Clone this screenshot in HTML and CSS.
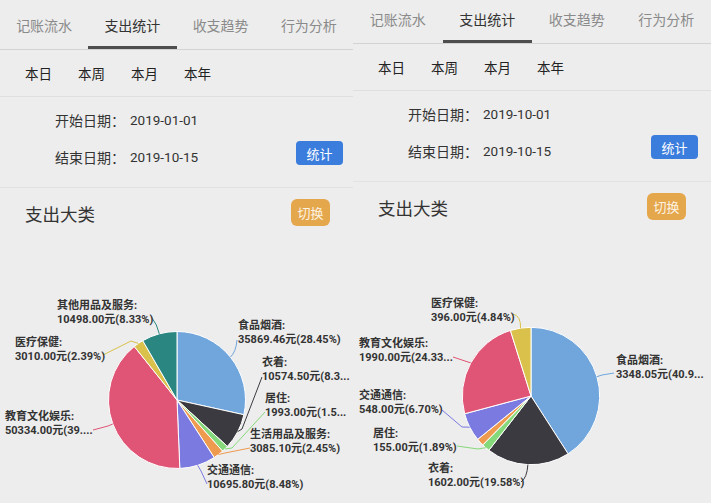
FILE: index.html
```html
<!DOCTYPE html>
<html lang="zh">
<head>
<meta charset="utf-8">
<title>支出统计</title>
<link rel="stylesheet" href="styles.css">
</head>
<body>
<div class="screen">
  <section class="panel panel-a">
    <nav class="tabs">
      <div class="tab">记账流水</div>
      <div class="tab active">支出统计</div>
      <div class="tab">收支趋势</div>
      <div class="tab">行为分析</div>
    </nav>
    <div class="periods"><span>本日</span><span>本周</span><span>本月</span><span>本年</span></div>
    <div class="dates">
      <div class="date-rows">
        <div class="date-row"><span class="dlabel">开始日期：</span><span class="dval">2019-01-01</span></div>
        <div class="date-row"><span class="dlabel">结束日期：</span><span class="dval">2019-10-15</span></div>
      </div>
      <button class="btn btn-blue">统计</button>
    </div>
    <div class="sec-head"><h2 class="sec-title">支出大类</h2><button class="btn btn-orange">切换</button></div>
    <div class="chart">
      <svg class="pie" width="353" height="271" viewBox="0 232 353 271">
        <g class="slices">
          <path fill="#70a6dc" d="M177 400 L177 331.5 A68.5 68.5 0 0 1 243.9 414.73 Z"/>
          <path fill="#3b3a41" d="M177 400 L243.9 414.73 A68.5 68.5 0 0 1 227.39 446.4 Z"/>
          <path fill="#86d97a" d="M177 400 L227.39 446.4 A68.5 68.5 0 0 1 222.57 451.14 Z"/>
          <path fill="#ef9b4f" d="M177 400 L222.57 451.14 A68.5 68.5 0 0 1 214.17 457.54 Z"/>
          <path fill="#7b7ae0" d="M177 400 L214.17 457.54 A68.5 68.5 0 0 1 179.8 468.44 Z"/>
          <path fill="#e05476" d="M177 400 L179.8 468.44 A68.5 68.5 0 0 1 134.27 346.46 Z"/>
          <path fill="#d9c14b" d="M177 400 L134.27 346.46 A68.5 68.5 0 0 1 142.77 340.67 Z"/>
          <path fill="#2a8680" d="M177 400 L142.77 340.67 A68.5 68.5 0 0 1 177 331.5 Z"/>
        </g>
        <g class="leaders">
          <path stroke="#70a6dc" d="M230.4 357.1 Q236 352 237 340"/>
          <path stroke="#3b3a41" d="M237.8 431.6 L242 429 L262 377"/>
          <path stroke="#86d97a" d="M225 449 L232 448 L265 412"/>
          <path stroke="#ef9b4f" d="M218.5 454.5 L225 453 L250 448"/>
          <path stroke="#7b7ae0" d="M197.7 465.3 L201 471 L207 484"/>
          <path stroke="#e05476" d="M112.8 424 L108 426 L93 430"/>
          <path stroke="#d9c14b" d="M138.4 343.4 L131 341 L103 355"/>
          <path stroke="#2a8680" d="M159.3 333.8 Q157 324 152 318"/>
        </g>
        <g class="labels">
          <text x="57" y="309">其他用品及服务:</text><text x="57" y="323">10498.00元(8.33%)</text>
          <text x="15" y="346">医疗保健:</text><text x="15" y="360">3010.00元(2.39%)</text>
          <text x="5" y="420">教育文化娱乐:</text><text x="5" y="434">50334.00元(39....</text>
          <text x="238" y="329">食品烟酒:</text><text x="238" y="343">35869.46元(28.45%)</text>
          <text x="262" y="366">衣着:</text><text x="262" y="380">10574.50元(8.3...</text>
          <text x="265" y="402">居住:</text><text x="265" y="416">1993.00元(1.5...</text>
          <text x="250" y="438">生活用品及服务:</text><text x="250" y="452">3085.10元(2.45%)</text>
          <text x="207" y="474">交通通信:</text><text x="207" y="488">10695.80元(8.48%)</text>
        </g>
      </svg>
    </div>
  </section>

  <section class="panel panel-b">
    <nav class="tabs">
      <div class="tab">记账流水</div>
      <div class="tab active">支出统计</div>
      <div class="tab">收支趋势</div>
      <div class="tab">行为分析</div>
    </nav>
    <div class="periods"><span>本日</span><span>本周</span><span>本月</span><span>本年</span></div>
    <div class="dates">
      <div class="date-rows">
        <div class="date-row"><span class="dlabel">开始日期：</span><span class="dval">2019-10-01</span></div>
        <div class="date-row"><span class="dlabel">结束日期：</span><span class="dval">2019-10-15</span></div>
      </div>
      <button class="btn btn-blue">统计</button>
    </div>
    <div class="sec-head"><h2 class="sec-title">支出大类</h2><button class="btn btn-orange">切换</button></div>
    <div class="chart">
      <svg class="pie" width="358" height="277" viewBox="353 226 358 277">
        <g class="slices">
          <path fill="#70a6dc" d="M531 396 L531 327.3 A68.7 68.7 0 0 1 568.11 453.82 Z"/>
          <path fill="#3b3a41" d="M531 396 L568.11 453.82 A68.7 68.7 0 0 1 488.89 450.29 Z"/>
          <path fill="#86d97a" d="M531 396 L488.89 450.29 A68.7 68.7 0 0 1 482.75 444.91 Z"/>
          <path fill="#ef9b4f" d="M531 396 L482.75 444.91 A68.7 68.7 0 0 1 477.68 439.33 Z"/>
          <path fill="#7b7ae0" d="M531 396 L477.68 439.33 A68.7 68.7 0 0 1 464.64 413.77 Z"/>
          <path fill="#e05476" d="M531 396 L464.64 413.77 A68.7 68.7 0 0 1 510.42 330.45 Z"/>
          <path fill="#d9c14b" d="M531 396 L510.42 330.45 A68.7 68.7 0 0 1 531 327.3 Z"/>
        </g>
        <g class="leaders">
          <path stroke="#d9c14b" d="M520.6 328.1 Q521 316 513 314"/>
          <path stroke="#e05476" d="M470.8 362.9 L465 361 L453 357"/>
          <path stroke="#7b7ae0" d="M469.8 427.2 L462 427 L442 410"/>
          <path stroke="#86d97a" d="M485.7 447.7 L478 449 L457 446"/>
          <path stroke="#3b3a41" d="M527.9 464.6 Q527 478 521 482"/>
          <path stroke="#70a6dc" d="M596.9 376.7 L602 375 L614 373"/>
        </g>
        <g class="labels">
          <text x="431" y="307">医疗保健:</text><text x="431" y="321">396.00元(4.84%)</text>
          <text x="359" y="347">教育文化娱乐:</text><text x="359" y="361">1990.00元(24.33...</text>
          <text x="359" y="399">交通通信:</text><text x="359" y="413">548.00元(6.70%)</text>
          <text x="373" y="437">居住:</text><text x="373" y="451">155.00元(1.89%)</text>
          <text x="428" y="472">衣着:</text><text x="428" y="486">1602.00元(19.58%)</text>
          <text x="616" y="364">食品烟酒:</text><text x="616" y="378">3348.05元(40.9...</text>
        </g>
      </svg>
    </div>
  </section>
</div>
</body>
</html>
```

FILE: styles.css
```css
* {
  box-sizing: border-box;
  margin: 0;
  padding: 0;
}

body {
  margin: 0;
  background: #ededed;
  overflow: hidden;
  font-family: "Noto Sans CJK SC", sans-serif;
  color: #333;
}

.screen {
  display: flex;
  width: 711px;
  height: 503px;
  overflow: hidden;
}

.panel {
  display: flex;
  flex-direction: column;
  flex: none;
}

.panel-a {
  width: 353px;
  height: 503px;
}

.panel-b {
  width: 358px;
  height: 509px;
  margin-top: -6px;
}

.tabs {
  display: flex;
  height: 50px;
  border-bottom: 1px solid #d3d3d3;
}

.tab {
  flex: 1;
  display: flex;
  align-items: center;
  justify-content: center;
  font-size: 14px;
  color: #8a8a8a;
}

.tab.active {
  color: #333;
  box-shadow: inset 0 -3px #4e4e4e;
}

.periods {
  display: flex;
  align-items: center;
  gap: 26px;
  height: 47px;
  padding-left: 25px;
  font-size: 13.5px;
  color: #222;
  border-bottom: 1px solid #dfdfdf;
}

.dates {
  display: flex;
  align-items: flex-end;
  justify-content: space-between;
  height: 91px;
  padding: 13px 10px 20px 55px;
  border-bottom: 1px solid #e2e2e2;
}

.panel-b .dates {
  padding-right: 13px;
}

.date-rows {
  display: flex;
  flex-direction: column;
  gap: 17px;
}

.date-row {
  display: flex;
  align-items: center;
  height: 20px;
}

.dlabel {
  width: 75px;
  font-size: 14px;
  color: #333;
}

.dval {
  font-family: Roboto, "Noto Sans CJK SC", sans-serif;
  font-size: 13.5px;
  color: #333;
}

.btn {
  border: 0;
  color: #fff;
  font-family: "Noto Sans CJK SC", sans-serif;
  font-size: 13px;
}

.btn-blue {
  width: 47px;
  height: 24px;
  margin-bottom: 2px;
  border-radius: 4px;
  background: #3b7ddd;
}

.btn-orange {
  width: 39px;
  height: 27px;
  border-radius: 6px;
  background: #e5a74c;
  color: #fdf3e3;
}

.sec-head {
  display: flex;
  justify-content: space-between;
  align-items: flex-start;
  height: 44px;
  padding: 11px 23px 0 25px;
}

.panel-b .sec-head {
  padding-right: 25px;
}

.sec-title {
  font-size: 17.5px;
  font-weight: normal;
  line-height: 30px;
  color: #333;
}

.chart {
  flex: 1;
}

.pie {
  display: block;
}

.slices path {
  stroke: #fff;
  stroke-width: 1;
  stroke-linejoin: round;
}

.leaders path {
  fill: none;
  stroke-width: 1;
}

.labels text {
  font-family: Roboto, "Noto Sans CJK SC", sans-serif;
  font-weight: bold;
  font-size: 11px;
  fill: #333;
}
```
